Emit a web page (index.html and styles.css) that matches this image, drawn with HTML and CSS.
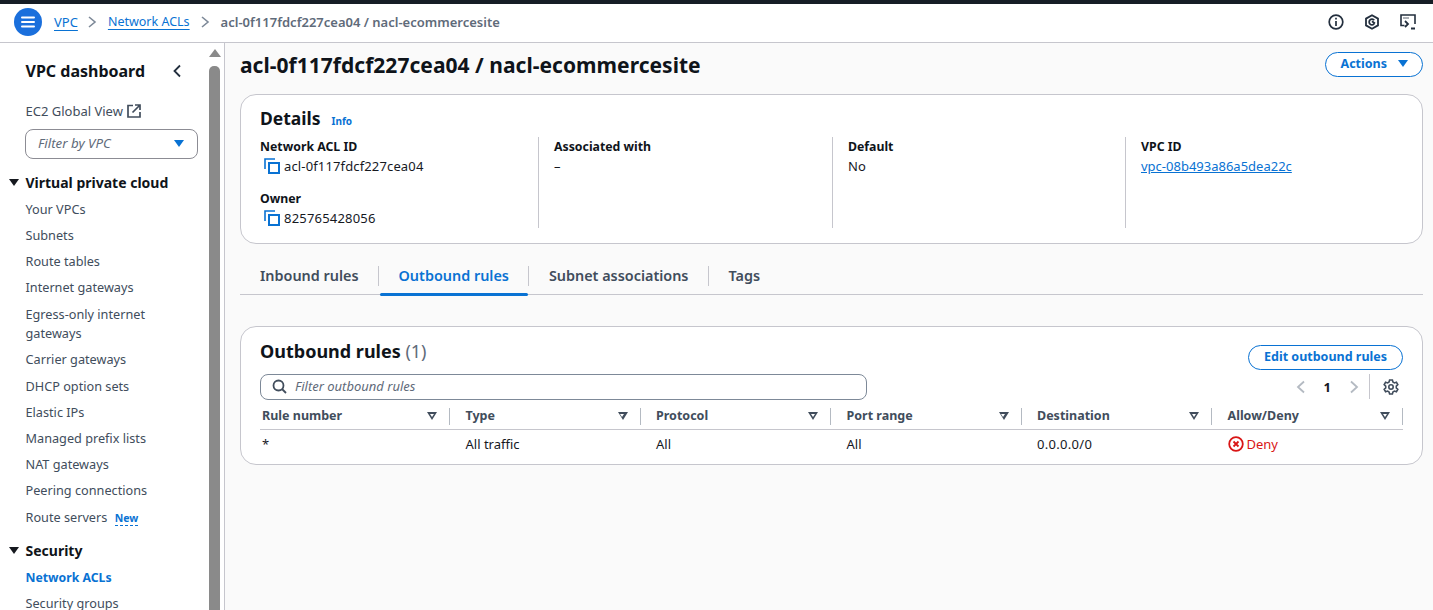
FILE: index.html
```html
<!DOCTYPE html>
<html lang="en">
<head>
<meta charset="utf-8">
<title>nacl-ecommercesite</title>
<link rel="stylesheet" href="styles.css">
</head>
<body>
<div class="topline"></div>
<header class="topbar">
  <button class="menu-btn" aria-label="Menu">
    <svg width="16" height="14" viewBox="0 0 16 14"><path d="M2 2.500h12M2 7h12M2 11.500h12" stroke="#fff" stroke-width="2" stroke-linecap="round" fill="none"/></svg>
  </button>
  <nav class="crumbs">
    <a href="#">VPC</a>
    <svg class="sep" width="12" height="14" viewBox="0 0 12 14"><path d="M3 2l6 5-6 5" stroke="#7d8998" stroke-width="1.600" fill="none"/></svg>
    <a href="#" class="crumb-small">Network ACLs</a>
    <svg class="sep sep-2" width="12" height="14" viewBox="0 0 12 14"><path d="M3 2l6 5-6 5" stroke="#7d8998" stroke-width="1.600" fill="none"/></svg>
    <span class="crumb-current">acl-0f117fdcf227cea04 / nacl-ecommercesite</span>
  </nav>
  <div class="top-icons">
    <svg width="16" height="16" viewBox="0 0 16 16" fill="none" stroke="#232f3e" stroke-width="1.700"><circle cx="8" cy="8" r="6.800"/><path d="M8 7v5M8 3.700v1.800"/></svg>
    <svg width="16" height="16" viewBox="0 0 16 16" fill="none" stroke="#232f3e" stroke-width="1.800"><path d="M8 1.200l6 3.400v6.800l-6 3.400-6-3.400V4.600z"/><path d="M10.200 6.300A2.800 2.800 0 1 0 10.200 9.700M8 7.200l3 2.300"/></svg>
    <svg width="16" height="16" viewBox="0 0 16 16" fill="none" stroke="#232f3e" stroke-width="1.600"><path d="M4.500 11.500H1V1h14v9"/><path d="M5 7l3 3-3 3M11 14.500h4" stroke-width="1.800"/><path d="M3.500 4h5" stroke-dasharray="1 1" stroke-width="1.500"/></svg>
  </div>
</header>
<div class="body-row">
  <aside class="sidebar">
    <div class="side-head">
      <h2>VPC dashboard</h2>
      <svg width="10" height="14" viewBox="0 0 10 14"><path d="M8 1.500L2.500 7 8 12.500" stroke="#232f3e" stroke-width="1.800" fill="none"/></svg>
    </div>
    <div class="global-view">EC2 Global View
      <svg width="14" height="14" viewBox="0 0 14 14" fill="none" stroke="#414d5c" stroke-width="1.700"><path d="M6 1.500H1v11.500h12V8"/><path d="M5.500 8.500L12.500 1.500M8 1h5v5"/></svg>
    </div>
    <div class="vpc-filter"><em>Filter by VPC</em><span class="caret-blue"></span></div>
    <div class="sec-head"><span class="tri"></span>Virtual private cloud</div>
    <ul class="side-list">
      <li>Your VPCs</li>
      <li>Subnets</li>
      <li>Route tables</li>
      <li>Internet gateways</li>
      <li>Egress-only internet gateways</li>
      <li>Carrier gateways</li>
      <li>DHCP option sets</li>
      <li>Elastic IPs</li>
      <li>Managed prefix lists</li>
      <li>NAT gateways</li>
      <li>Peering connections</li>
      <li>Route servers <span class="new-tag">New</span></li>
    </ul>
    <div class="sec-head sec-2"><span class="tri"></span>Security</div>
    <ul class="side-list">
      <li class="active">Network ACLs</li>
      <li>Security groups</li>
    </ul>
  </aside>
  <div class="scrolltrack">
    <span class="scroll-up"></span>
    <span class="scroll-thumb"></span>
  </div>
  <main class="main">
    <div class="title-row">
      <h1>acl-0f117fdcf227cea04 / nacl-ecommercesite</h1>
      <button class="pill actions">Actions <span class="caret-blue"></span></button>
    </div>
    <section class="card details">
      <h2 class="details-title">Details <a href="#" class="info">Info</a></h2>
      <div class="detail-grid">
        <div class="col col-first">
          <div class="label">Network ACL ID</div>
          <div class="value copy">
            <svg class="copy-icon" width="16" height="16" viewBox="0 0 16 16" fill="none" stroke="#0972d3" stroke-width="2"><path d="M5 5h10v10H5z"/><path d="M11 1H1v10" stroke-width="1.600"/></svg><span class="wide-a">acl-0f117fdcf227cea04</span></div>
          <div class="label label-2">Owner</div>
          <div class="value copy">
            <svg class="copy-icon" width="16" height="16" viewBox="0 0 16 16" fill="none" stroke="#0972d3" stroke-width="2"><path d="M5 5h10v10H5z"/><path d="M11 1H1v10" stroke-width="1.600"/></svg><span class="wide-b">825765428056</span></div>
        </div>
        <div class="col">
          <div class="label">Associated with</div>
          <div class="value">–</div>
        </div>
        <div class="col">
          <div class="label">Default</div>
          <div class="value">No</div>
        </div>
        <div class="col">
          <div class="label">VPC ID</div>
          <div class="value"><a href="#" class="link">vpc-08b493a86a5dea22c</a></div>
        </div>
      </div>
    </section>
    <div class="tabs">
      <span class="tab">Inbound rules</span>
      <span class="tab active">Outbound rules</span>
      <span class="tab">Subnet associations</span>
      <span class="tab">Tags</span>
    </div>
    <section class="card rules">
      <div class="rules-top">
        <div class="rules-left">
          <h2>Outbound rules <span class="count">(1)</span></h2>
          <div class="search">
            <svg width="15" height="15" viewBox="0 0 15 15" fill="none" stroke="#414d5c" stroke-width="1.800"><circle cx="6.500" cy="6.500" r="5"/><path d="M10 10l4 4"/></svg>
            <em>Filter outbound rules</em>
          </div>
        </div>
        <div class="rules-right">
          <button class="pill edit">Edit outbound rules</button>
          <div class="pager">
            <svg width="10" height="14" viewBox="0 0 10 14"><path d="M8 1.500L2 7l6 5.500" stroke="#b4bac2" stroke-width="1.800" fill="none"/></svg>
            <b>1</b>
            <svg width="10" height="14" viewBox="0 0 10 14"><path d="M2 1.500L8 7l-6 5.500" stroke="#b4bac2" stroke-width="1.800" fill="none"/></svg>
            <span class="pager-div"></span>
            <svg width="16" height="16" viewBox="0 0 16 16" fill="none" stroke="#414d5c" stroke-width="1.600"><path d="M6.600 1h2.800l.5 2 1.500.9 2-.6 1.400 2.400-1.500 1.400v1.800l1.500 1.400-1.400 2.400-2-.6-1.500.9-.5 2H6.600l-.5-2-1.500-.9-2 .6-1.400-2.400 1.500-1.400V7.100L1.200 5.700l1.400-2.400 2 .6 1.500-.9z"/><circle cx="8" cy="8" r="2.200"/></svg>
          </div>
        </div>
      </div>
      <div class="table">
        <div class="th"><span>Rule number</span><i class="sort"></i></div>
        <div class="th"><span>Type</span><i class="sort"></i></div>
        <div class="th"><span>Protocol</span><i class="sort"></i></div>
        <div class="th"><span>Port range</span><i class="sort"></i></div>
        <div class="th"><span>Destination</span><i class="sort"></i></div>
        <div class="th"><span>Allow/Deny</span><i class="sort"></i></div>
        <div class="td">*</div>
        <div class="td">All traffic</div>
        <div class="td">All</div>
        <div class="td">All</div>
        <div class="td wide-c">0.0.0.0/0</div>
        <div class="td deny">
          <svg width="16" height="16" viewBox="0 0 16 16" fill="none" stroke="#d91515" stroke-width="1.800"><circle cx="8" cy="8" r="6.800"/><path d="M5.500 5.500l5 5M10.500 5.500l-5 5"/></svg>Deny</div>
      </div>
    </section>
  </main>
</div>
</body>
</html>
```
FILE: styles.css
```css
* { box-sizing: border-box; }
html, body { margin: 0; padding: 0; height: 610px; overflow: hidden; }
body { font-family: "Noto Sans", sans-serif; font-size: 13px; line-height: 20px; color: #16191f; background: #fff; }
h1, h2, ul { margin: 0; padding: 0; }
ul { list-style: none; }
a { color: #0972d3; }
button { font-family: inherit; cursor: pointer; }
em { font-style: italic; }

.topline { height: 4px; background: #161d26; }
.topbar { height: 39px; display: flex; align-items: center; padding: 0 17px 2px 14px; border-bottom: 1px solid #c6c6cd; background: #fff; }
.menu-btn { width: 28px; height: 28px; border-radius: 50%; border: 0; padding: 0; background: #1a6fdc; display: flex; align-items: center; justify-content: center; }
.crumbs { display: flex; align-items: center; margin-left: 12px; font-size: 13px; }
.crumbs a { text-decoration-thickness: 1px; text-underline-offset: 3px; }
.crumb-small { font-size: 12.500px; }
.crumbs .sep { margin: 0 10px 0 8px; }
.crumbs .sep-2 { margin: 0 10px 0 9px; }
.crumb-current { font-weight: 600; color: #5f6b7a; }
.top-icons { margin-left: auto; display: flex; gap: 20px; align-items: center; }

.body-row { display: flex; height: 567px; }
.sidebar { width: 209px; flex: none; padding: 16px 0 0 0; overflow: hidden; background: #fff; }
.side-head { display: flex; align-items: center; justify-content: space-between; padding: 0 27px 0 25.500px; height: 24px; }
.side-head h2 { font-size: 16px; font-weight: 700; line-height: 24px; color: #0f141a; }
.global-view { margin: 18px 0 0 25.500px; color: #414d5c; display: flex; align-items: center; gap: 4px; height: 20px; }
.vpc-filter { margin: 8px 11px 0 25px; height: 30px; border: 1px solid #8c8c94; border-radius: 8px; display: flex; align-items: center; justify-content: space-between; padding: 0 13px 2px 12px; color: #5f6b7a; font-size: 13.300px; }
.caret-blue { display: inline-block; width: 0; height: 0; border-left: 5.500px solid transparent; border-right: 5.500px solid transparent; border-top: 7px solid #0972d3; }
.sec-head { position: relative; margin-top: 14px; padding-left: 25.500px; font-size: 14px; font-weight: 700; color: #0f141a; line-height: 20px; }
.tri { position: absolute; left: 9px; top: 6px; width: 0; height: 0; border-left: 5px solid transparent; border-right: 5px solid transparent; border-top: 7px solid #16191f; }
.side-list { margin-top: 3.600px; }
.side-list li { padding: 3.300px 20px 3.300px 25.500px; color: #414d5c; font-size: 12.700px; line-height: 19.600px; }
.side-list li.active { color: #0972d3; font-weight: 700; font-size: 12.250px; }
.new-tag { color: #0972d3; font-size: 10.500px; font-weight: 700; margin-left: 4px; border-bottom: 1px dashed #0972d3; line-height: 14px; display: inline-block; }
.sec-2 { margin-top: 10.600px; }

.scrolltrack { position: relative; width: 16px; flex: none; background: #fff; border-right: 1px solid #c6c6cd; }
.scroll-up { position: absolute; left: 0; top: 6px; width: 0; height: 0; border-left: 6px solid transparent; border-right: 6px solid transparent; border-bottom: 8px solid #8a8a8a; }
.scroll-thumb { position: absolute; left: 0; top: 23px; bottom: 0; width: 11px; background: #8a8a8a; border-radius: 5px 5px 0 0; }

.main { flex: 1; min-width: 0; background: #fafafa; padding: 6px 10px 0 15px; }
.title-row { display: flex; justify-content: space-between; align-items: flex-start; height: 45px; }
.title-row h1 { font-size: 21px; font-weight: 700; line-height: 32px; color: #0f141a; letter-spacing: .03px; }
.pill { border: 1px solid #0972d3; border-radius: 13px; background: #fff; color: #0972d3; font-weight: 700; font-size: 12.500px; line-height: 18px; height: 25px; padding: 0 14px 2px; display: flex; align-items: center; gap: 11px; }
.actions { margin-top: 3px; padding: 0 14px 2px 15px; }
.card { background: #fff; border: 1px solid #c6c6cd; border-radius: 16px; }
.details { height: 150px; padding: 10px 19px 0 19px; }
.details-title { font-size: 17.500px; font-weight: 700; line-height: 26px; color: #0f141a; display: flex; align-items: baseline; gap: 11px; }
.info { font-size: 10px; font-weight: 700; text-decoration: none; }
.detail-grid { display: grid; grid-template-columns: 278px 294px 293px 1fr; margin-top: 3px; }
.col { min-height: 91px; border-left: 1px solid #c6c6cd; padding-left: 15px; }
.col-first { border-left: 0; padding-left: 0; }
.label { font-weight: 700; font-size: 12.300px; line-height: 20px; color: #0f141a; }
.label-2 { margin-top: 14px; }
.value { line-height: 18px; color: #16191f; font-size: 13px; }
.copy { display: flex; align-items: center; }
.copy-icon { margin: 0 4px 0 4px; flex: none; }
.wide-a { letter-spacing: .14px; }
.wide-b { letter-spacing: .2px; }
.wide-c { letter-spacing: .3px; }

.tabs { display: flex; align-items: center; height: 37px; margin-top: 14px; border-bottom: 1px solid #c6c6cd; position: relative; }
.tab { font-size: 14.400px; font-weight: 600; color: #414d5c; padding: 0 19.500px; border-right: 1px solid #c6c6cd; line-height: 20px; }
.tab:first-child { padding-left: 20px; }
.tab:last-child { border-right: 0; }
.tab.active { color: #0972d3; position: relative; }
.tab.active::after { content: ""; position: absolute; left: 1px; right: 0; bottom: -10px; height: 3px; background: #0972d3; border-radius: 2px; }

.rules { margin-top: 31px; height: 139px; padding: 0 19px; }
.rules-top { display: flex; justify-content: space-between; height: 78px; }
.rules-left { width: 607px; padding-top: 11px; }
.rules-left h2 { font-size: 18px; font-weight: 700; line-height: 26px; color: #0f141a; }
.count { font-weight: 400; color: #5f6b7a; }
.search { margin-top: 10px; height: 26px; border: 1px solid #7d8998; border-radius: 8px; display: flex; align-items: center; gap: 8px; padding: 0 11px 2px; color: #5f6b7a; font-size: 13px; }
.rules-right { display: flex; flex-direction: column; align-items: flex-end; padding-top: 18px; }
.edit { padding: 0 15px 2px; }
.pager { margin-top: 4px; display: flex; align-items: center; height: 25px; font-size: 13px; padding-right: 4px; }
.pager b { margin: 0 18px; font-weight: 700; }
.pager-div { width: 1px; height: 25px; background: #c6c6cd; margin: 0 13px 0 10px; }
.table { display: grid; grid-template-columns: 190px repeat(4, 190.500px) 1fr; }
.th { height: 25px; border-bottom: 1px solid #c6c6cd; display: flex; align-items: center; justify-content: space-between; padding: 0 13px 2px 2px; position: relative; font-weight: 700; font-size: 12.500px; color: #414d5c; }
.th + .th { padding-left: 15.500px; }
.th::after { content: ""; position: absolute; right: 0; top: 3px; height: 17px; width: 1px; background: #b4bac2; }
.sort { width: 0; height: 0; position: relative; border-left: 5.500px solid transparent; border-right: 5.500px solid transparent; border-top: 8px solid #414d5c; flex: none; }
.sort::after { content: ""; position: absolute; left: -2.500px; top: -6.500px; border-left: 2.500px solid transparent; border-right: 2.500px solid transparent; border-top: 3.500px solid #fff; }
.td { height: 28px; display: flex; align-items: center; padding: 0 0 0 2px; font-size: 13px; color: #16191f; }
.td + .td { padding-left: 15.500px; }
.deny { color: #d91515; gap: 3px; }
.deny svg { flex: none; }
```
